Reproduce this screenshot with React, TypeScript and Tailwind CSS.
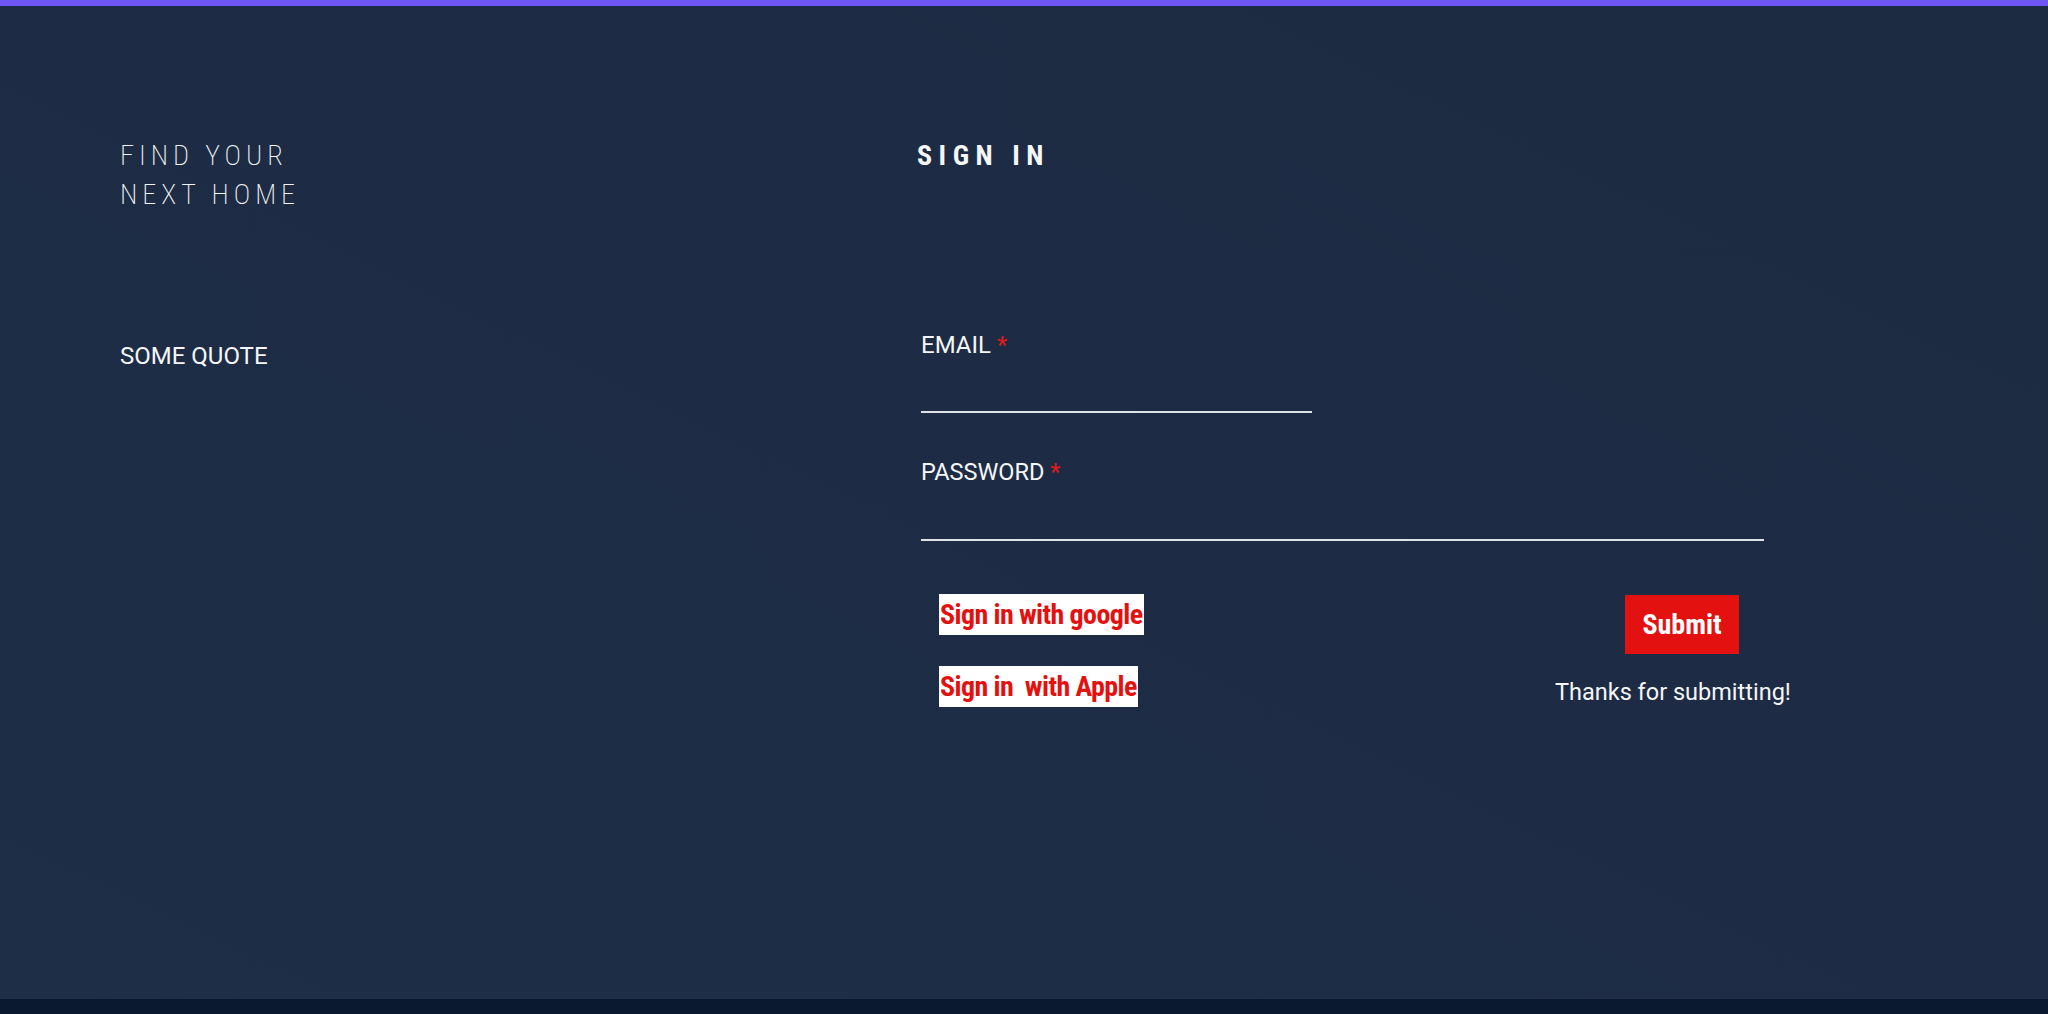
export default function App() {
  return (
    <div className="flex min-h-screen flex-col bg-[#1d2c44] font-[Roboto,sans-serif] text-[#f5f6f8]">
      {/* top accent */}
      <div className="h-[6px] bg-[#6f57f6]" />

      <main className="flex h-[993px] bg-gradient-to-tr from-[#1e2e47] via-[#1d2c44] to-[#1c2b42] pl-[120px]">
        {/* left column */}
        <div className="w-[797px] shrink-0 pt-[130px]">
          <h1 className="text-[28px] leading-[39px] font-extralight font-stretch-condensed tracking-[5px] text-[#f2f4f6]">
            FIND YOUR
            <br />
            NEXT HOME
          </h1>
          <p className="mt-[127px] text-[24px] leading-[30px]">SOME QUOTE</p>
        </div>

        {/* sign in form */}
        <div className="w-[880px] pt-[130px]">
          <h2 className="text-[28px] leading-[39px] font-bold font-stretch-condensed tracking-[6.5px]">SIGN IN</h2>

          <form className="ml-[4px] mt-[155px]" onSubmit={(e) => e.preventDefault()}>
            <label className="block text-[24px] leading-[30px]">
              EMAIL <span className="text-[#e3191b]">*</span>
            </label>
            <input
              type="email"
              className="block h-[53px] w-[391px] border-b-2 border-[#dfe3e8] bg-transparent outline-none"
            />

            <label className="mt-[44px] block text-[23.5px] leading-[30px]">
              PASSWORD <span className="text-[#e3191b]">*</span>
            </label>
            <input
              type="password"
              className="block h-[54px] w-[843px] border-b-2 border-[#dfe3e8] bg-transparent outline-none"
            />

            <div className="mt-[53px] flex">
              <div className="flex w-[634px] flex-col items-start gap-[31px] pl-[18px]">
                <button
                  type="button"
                  className="h-[41px] bg-white px-[1px] text-[28px] leading-[41px] font-bold font-stretch-condensed tracking-[-0.6px] text-[#e3110f]"
                >
                  Sign in with google
                </button>
                <button
                  type="button"
                  className="h-[41px] whitespace-pre bg-white px-[1px] text-[28px] leading-[41px] font-bold font-stretch-condensed tracking-[-0.6px] text-[#e3110f]"
                >
                  {"Sign in  with Apple"}
                </button>
              </div>

              <div className="flex w-[240px] flex-col items-start">
                <button
                  type="submit"
                  className="ml-[70px] mt-[1px] h-[59px] w-[114px] bg-[#e3110f] text-[28px] font-bold font-stretch-condensed text-white"
                >
                  Submit
                </button>
                <p className="mt-[23px] whitespace-nowrap text-[23.5px] leading-[30px]">Thanks for submitting!</p>
              </div>
            </div>
          </form>
        </div>
      </main>

      <div className="h-[15px] bg-[#0a1930]" />
    </div>
  );
}
